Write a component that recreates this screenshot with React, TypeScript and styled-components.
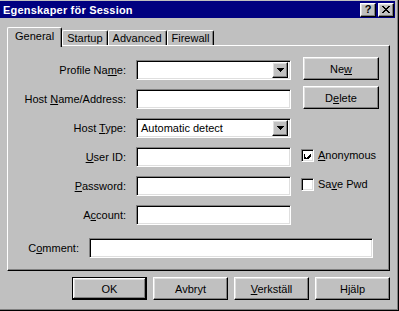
import React from "react";
import styled, { createGlobalStyle } from "styled-components";

const GlobalStyle = createGlobalStyle`
  body {
    margin: 0;
    font-family: "Liberation Sans", Arial, sans-serif;
    font-size: 11px;
    color: #000;
  }
`;

const raised = `
  border-top: 1px solid #fff;
  border-left: 1px solid #fff;
  border-right: 1px solid #000;
  border-bottom: 1px solid #000;
  box-shadow: inset -1px -1px #808080, inset 1px 1px #dfdfdf;
`;

const sunken = `
  border-top: 1px solid #808080;
  border-left: 1px solid #808080;
  border-right: 1px solid #fff;
  border-bottom: 1px solid #fff;
  box-shadow: inset 1px 1px #000, inset -1px -1px #dfdfdf;
`;

const Window = styled.div`
  width: 399px;
  height: 311px;
  box-sizing: border-box;
  background: #c0c0c0;
  border-right: 1px solid #000;
  border-bottom: 1px solid #000;
  box-shadow: inset -1px -1px #808080;
  padding: 1px 3px 3px 0;
  display: flex;
  flex-direction: column;
`;

const TitleBar = styled.div`
  height: 17px;
  background: #000080;
  color: #fff;
  font-weight: bold;
  font-size: 11px;
  display: flex;
  align-items: center;
  padding: 0 1px 0 3px;
`;

const Title = styled.span`
  flex: 1;
  letter-spacing: 0.2px;
`;

const CaptionButtons = styled.div`
  display: flex;
  gap: 2px;
`;

const CaptionButton = styled.div`
  width: 16px;
  height: 14px;
  box-sizing: border-box;
  background: #c0c0c0;
  ${raised}
  display: flex;
  align-items: center;
  justify-content: center;
  color: #000;
  font-weight: bold;
  font-size: 11px;
  line-height: 1;
`;

const Body = styled.div`
  padding: 0 5px 0 7px;
  display: flex;
  flex-direction: column;
`;

const TabStrip = styled.div`
  margin-top: 9px;
  height: 18px;
  display: flex;
  align-items: flex-end;
`;

const Tab = styled.div<{ $active?: boolean }>`
  position: relative;
  z-index: ${(p) => (p.$active ? 2 : 1)};
  box-sizing: border-box;
  height: ${(p) => (p.$active ? "20px" : "15px")};
  margin-bottom: ${(p) => (p.$active ? "-2px" : "0")};
  padding: ${(p) => (p.$active ? "2px 7px 0" : "1px 4px 0")};
  background: #c0c0c0;
  border-top: 1px solid #fff;
  border-left: 1px solid #fff;
  border-right: 1px solid #000;
  border-radius: 2px 2px 0 0;
  box-shadow: inset -1px 0 #808080;
  white-space: nowrap;
`;

const Panel = styled.div`
  ${raised}
  box-shadow: inset -1px -1px #808080;
  padding: 14px 0 12px 0;
  display: flex;
  flex-direction: column;
`;

const FormGrid = styled.div`
  display: grid;
  grid-template-columns: 117px 155px 78px;
  grid-auto-rows: 20px;
  column-gap: 10px;
  row-gap: 9px;
  padding-left: 1px;
  align-items: center;
`;

const Label = styled.label`
  text-align: right;
  white-space: nowrap;
`;

const Field = styled.div<{ $width?: number }>`
  box-sizing: border-box;
  height: 20px;
  width: ${(p) => (p.$width ? `${p.$width}px` : "auto")};
  background: #fff;
  ${sunken}
  display: flex;
  align-items: center;
  padding: 2px 2px 2px 4px;
`;

const FieldText = styled.span`
  flex: 1;
  white-space: nowrap;
`;

const DropButton = styled.div`
  width: 16px;
  height: 16px;
  box-sizing: border-box;
  background: #c0c0c0;
  ${raised}
  display: flex;
  align-items: center;
  justify-content: center;
`;

const SideButton = styled.button`
  align-self: start;
  margin: -3px 0 0 2px;
  width: 76px;
  height: 23px;
  box-sizing: border-box;
  background: #c0c0c0;
  ${raised}
  font: inherit;
  color: #000;
  padding: 0;
`;

const CheckRow = styled.div`
  display: flex;
  align-items: center;
  gap: 4px;
  margin-top: -4px;
`;

const CheckBox = styled.div`
  width: 13px;
  height: 13px;
  box-sizing: border-box;
  background: #fff;
  ${sunken}
  display: flex;
  align-items: center;
  justify-content: center;
`;

const CommentRow = styled.div`
  margin-top: 13px;
  display: flex;
  align-items: center;
  gap: 10px;
  padding-left: 1px;
`;

const CommentLabel = styled(Label)`
  width: 70px;
`;

const Footer = styled.div`
  margin-top: 6px;
  display: flex;
  justify-content: flex-end;
  gap: 6px;
  padding-right: 0;
`;

const DialogButton = styled.button<{ $default?: boolean }>`
  width: 75px;
  height: 23px;
  box-sizing: border-box;
  background: #c0c0c0;
  font: inherit;
  color: #000;
  padding: 0;
  border: 1px solid ${(p) => (p.$default ? "#000" : "transparent")};
  box-shadow: ${(p) =>
    p.$default
      ? "inset -1px -1px #000, inset 1px 1px #fff, inset -2px -2px #808080, inset 2px 2px #dfdfdf"
      : "none"};
  ${(p) => (p.$default ? "" : raised)}
`;

const Key = styled.span`
  text-decoration: underline;
`;

function Arrow() {
  return (
    <svg width="7" height="4" viewBox="0 0 7 4">
      <path d="M0 0h7L3.5 4z" fill="#000" shapeRendering="crispEdges" />
    </svg>
  );
}

function Check() {
  return (
    <svg width="7" height="7" viewBox="0 0 7 7" shapeRendering="crispEdges">
      <path
        d="M0 2h1v3h1v1h1v-1h1v-1h1v-1h1v-1h1v3h-1v1h-1v1h-1v1h-1v1h-1v-1h-1v-1h-1z"
        fill="#000"
      />
    </svg>
  );
}

function CloseGlyph() {
  return (
    <svg width="8" height="7" viewBox="0 0 8 7" shapeRendering="crispEdges">
      <path
        d="M0 0h2v1h1v1h2v-1h1v-1h2v1h-1v1h-1v1h-1v1h1v1h1v1h1v1h-2v-1h-1v-1h-2v1h-1v1h-2v-1h1v-1h1v-1h1v-1h-1v-1h-1v-1h-1z"
        fill="#000"
      />
    </svg>
  );
}

function Combo({ value }: { value?: string }) {
  return (
    <Field style={{ paddingRight: 2 }}>
      <FieldText>{value}</FieldText>
      <DropButton>
        <Arrow />
      </DropButton>
    </Field>
  );
}

export default function App() {
  return (
    <>
      <GlobalStyle />
      <Window>
        <TitleBar>
          <Title>Egenskaper för Session</Title>
          <CaptionButtons>
            <CaptionButton>?</CaptionButton>
            <CaptionButton>
              <CloseGlyph />
            </CaptionButton>
          </CaptionButtons>
        </TitleBar>
        <Body>
          <TabStrip>
            <Tab $active>General</Tab>
            <Tab>Startup</Tab>
            <Tab>Advanced</Tab>
            <Tab>Firewall</Tab>
          </TabStrip>
          <Panel>
            <FormGrid>
              <Label>
                Profile Na<Key>m</Key>e:
              </Label>
              <Combo />
              <SideButton>
                Ne<Key>w</Key>
              </SideButton>

              <Label>
                Host <Key>N</Key>ame/Address:
              </Label>
              <Field />
              <SideButton>
                D<Key>e</Key>lete
              </SideButton>

              <Label>
                Host <Key>T</Key>ype:
              </Label>
              <Combo value="Automatic detect" />
              <div />

              <Label>
                <Key>U</Key>ser ID:
              </Label>
              <Field />
              <CheckRow>
                <CheckBox>
                  <Check />
                </CheckBox>
                <span>
                  <Key>A</Key>nonymous
                </span>
              </CheckRow>

              <Label>
                <Key>P</Key>assword:
              </Label>
              <Field />
              <CheckRow>
                <CheckBox />
                <span>
                  Sa<Key>v</Key>e Pwd
                </span>
              </CheckRow>

              <Label>
                A<Key>c</Key>count:
              </Label>
              <Field />
              <div />
            </FormGrid>
            <CommentRow>
              <CommentLabel>
                C<Key>o</Key>mment:
              </CommentLabel>
              <Field $width={284} />
            </CommentRow>
          </Panel>
          <Footer>
            <DialogButton $default>OK</DialogButton>
            <DialogButton>Avbryt</DialogButton>
            <DialogButton>
              <Key>V</Key>erkställ
            </DialogButton>
            <DialogButton>Hjälp</DialogButton>
          </Footer>
        </Body>
      </Window>
    </>
  );
}
